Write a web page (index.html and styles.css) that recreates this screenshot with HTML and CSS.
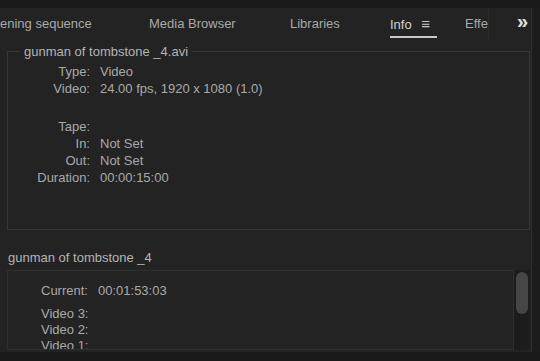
FILE: index.html
```html
<!DOCTYPE html>
<html lang="en">
<head>
  <meta charset="UTF-8" />
  <title>Info</title>
  <link rel="stylesheet" href="styles.css">
</head>
<body>
  <div class="frame">
    <div class="panel">
      <div class="tabs">
        <span class="tab cut">ening sequence</span>
        <span class="tab">Media Browser</span>
        <span class="tab">Libraries</span>
        <span class="tab active">Info <span class="menu">&#8801;</span></span>
        <span class="tab clip">Effe</span>
        <span class="more">&#187;</span>
      </div>
      <div class="content">
        <fieldset class="clip-box">
          <legend>gunman of tombstone _4.avi</legend>
          <div class="rows">
            <span class="k">Type:</span><span>Video</span>
            <span class="k">Video:</span><span>24.00 fps, 1920 x 1080 (1.0)</span>
            <span class="k gap">&nbsp;</span><span class="gap"></span>
            <span class="k">Tape:</span><span></span>
            <span class="k">In:</span><span>Not Set</span>
            <span class="k">Out:</span><span>Not Set</span>
            <span class="k">Duration:</span><span>00:00:15:00</span>
          </div>
        </fieldset>
        <div class="seq-title">gunman of tombstone _4</div>
        <div class="seq">
          <div class="seq-box">
            <div class="current"><span class="k2">Current:</span><span>00:01:53:03</span></div>
            <div class="track">Video 3:</div>
            <div class="track">Video 2:</div>
            <div class="track">Video 1:</div>
          </div>
          <div class="scroll"><div class="thumb"></div></div>
        </div>
      </div>
    </div>
    <div class="side"></div>
  </div>
</body>
</html>
```

FILE: styles.css
```css
* {
  margin: 0;
  padding: 0;
  box-sizing: border-box;
}

body {
  background: #1a1a1a;
  width: 540px;
  height: 361px;
  overflow: hidden;
  font-family: 'Liberation Sans', Arial, sans-serif;
  font-size: 13px;
  color: #a9a9a9;
}

.frame {
  display: flex;
  height: 352px;
  padding-top: 8px;
}

.panel {
  width: 532px;
  background: #232323;
  border-right: 1px solid #2e2e2e;
  display: flex;
  flex-direction: column;
}

.side {
  flex: 1;
  background: #1c1c1c;
}

.tabs {
  height: 32px;
  display: flex;
  align-items: center;
  white-space: nowrap;
}

.tab {
  padding-bottom: 2px;
}

.tab.cut {
  width: 149px;
}

.tab:nth-child(2) {
  width: 141px;
}

.tab:nth-child(3) {
  width: 100px;
}

.tab.active {
  color: #d4d4d4;
  width: 75px;
  position: relative;
}

.tab.active::after {
  content: "";
  position: absolute;
  left: 0;
  bottom: -4px;
  width: 47px;
  height: 2px;
  background: #c8c8c8;
}

.menu {
  font-size: 15px;
  margin-left: 6px;
  color: #c8c8c8;
}

.tab.clip {
  width: 24px;
  height: 32px;
  display: flex;
  align-items: center;
  overflow: hidden;
  border-right: 1px solid #2b2b2b;
}

.more {
  margin-left: 28px;
  font-size: 20px;
  font-weight: bold;
  color: #e0e0e0;
  padding-bottom: 5px;
}

.content {
  flex: 1;
  padding: 4px 1px 0 7px;
  display: flex;
  flex-direction: column;
  overflow: hidden;
}

.clip-box {
  border: 1px solid #373737;
  height: 186px;
}

.clip-box legend {
  margin-left: 12px;
  padding: 0 4px;
  color: #b4b4b4;
}

.rows {
  display: grid;
  grid-template-columns: 82px 1fr;
  column-gap: 10px;
  line-height: 17px;
  padding-top: 4px;
}

.rows .k {
  text-align: right;
}

.rows .gap {
  height: 21px;
}

.seq-title {
  margin-top: 19px;
  margin-left: 1px;
  color: #b4b4b4;
  line-height: 17px;
}

.seq {
  display: flex;
  margin-top: 4px;
  height: 80px;
}

.seq-box {
  flex: 1;
  border: 1px solid #303030;
  padding: 12px 0 0 33px;
  overflow: hidden;
  line-height: 16px;
}

.current {
  margin-bottom: 7px;
}

.k2 {
  display: inline-block;
  width: 57px;
}

.scroll {
  width: 16px;
  background: #1c1c1c;
  padding: 2px;
}

.thumb {
  height: 42px;
  border-radius: 6px;
  background: #464646;
}
```
